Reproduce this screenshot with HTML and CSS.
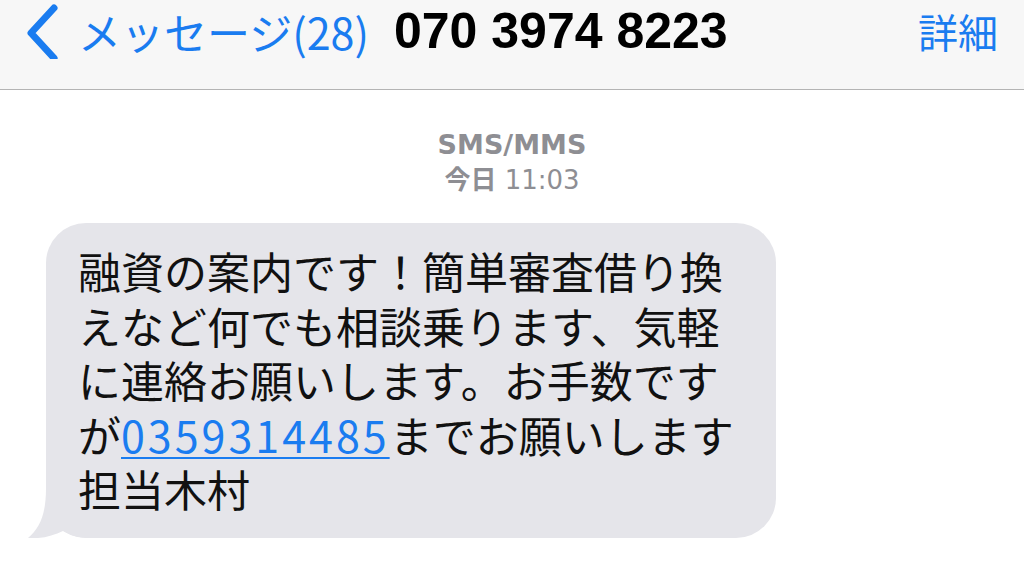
FILE: index.html
```html
<!DOCTYPE html>
<html lang="ja">
<head>
    <meta charset="UTF-8">
    <meta name="viewport" content="width=device-width, initial-scale=1.0">
    <title>メッセージ</title>
    <link rel="stylesheet" href="styles.css">
</head>
<body>
    <div class="navbar">
        <div class="nav-row">
            <a class="back" href="#">
                <svg class="chevron" width="36" height="56" viewBox="0 0 36 56">
                    <polyline points="30,5 7,30 30,55" fill="none" stroke="#1a7cf0" stroke-width="7" stroke-linecap="round" stroke-linejoin="round"/>
                </svg>
                <span class="back-label">メッセージ(28)</span>
            </a>
            <span class="title">070 3974 8223</span>
            <a class="details" href="#">詳細</a>
        </div>
    </div>

    <div class="thread">
        <div class="meta">
            <div class="service">SMS/MMS</div>
            <div class="time"><b>今日</b> 11:03</div>
        </div>

        <div class="bubble">
            融資の案内です！簡単審査借り換えなど何でも相談乗ります、気軽に連絡お願いします。お手数ですが<a class="phone" href="#">0359314485</a>までお願いします<br>担当木村
            <svg class="tail" width="62" height="50" viewBox="0 0 62 50">
                <path d="M18,0 C18,26 12,40 0,50 C13,51 25,48 35,43 C42,47 50,50 62,50 L62,0 Z" fill="#e5e5ea"/>
            </svg>
        </div>
    </div>
</body>
</html>
```

FILE: styles.css
```css
body {
    margin: 0;
    width: 1024px;
    height: 567px;
    overflow: hidden;
    background-color: #fff;
    font-family: "Noto Sans CJK JP", sans-serif;
}
a {
    text-decoration: none;
}
.navbar {
    height: 89px;
    background-color: #f7f7f7;
    border-bottom: 1px solid #b4b4b4;
}
.nav-row {
    display: flex;
    align-items: center;
    height: 62px;
    padding: 0 26px 0 24px;
}
.back {
    display: flex;
    align-items: center;
    color: #1a7cf0;
}
.chevron {
    display: block;
    margin-right: 18px;
}
.back-label {
    font-size: 43px;
    line-height: 1;
}
.title {
    margin-left: 25px;
    font-family: "Liberation Sans", Arial, sans-serif;
    font-weight: bold;
    font-size: 50px;
    color: #000;
}
.details {
    margin-left: auto;
    font-size: 40px;
    line-height: 1;
    color: #1a7cf0;
}
.thread {
    padding: 37px 0 0 46px;
}
.meta {
    width: 932px;
    text-align: center;
    color: #8e8e93;
    font-family: "DejaVu Sans", "Noto Sans CJK JP", sans-serif;
}
.service {
    font-weight: bold;
    font-size: 27px;
    line-height: 35px;
}
.time {
    font-size: 26px;
    line-height: 32px;
}
.time b {
    font-family: "Noto Sans CJK JP", sans-serif;
}
.bubble {
    position: relative;
    z-index: 0;
    width: 670px;
    margin-top: 27px;
    padding: 20px 28px 22px 32px;
    background-color: #e5e5ea;
    border-radius: 40px;
    font-size: 43px;
    line-height: 54.5px;
    color: #111;
}
.phone {
    display: inline-block;
    color: #1a7cf0;
    text-decoration: underline;
    text-decoration-thickness: 2px;
    text-underline-offset: 4px;
    letter-spacing: 3px;
}
.tail {
    position: absolute;
    z-index: -1;
    left: -18px;
    bottom: 0;
}
```
